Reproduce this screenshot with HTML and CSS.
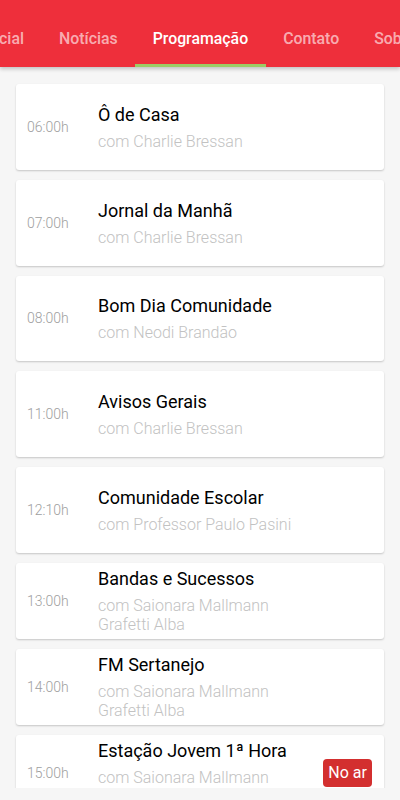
FILE: index.html
```html
<!DOCTYPE html>
<html lang="pt-BR">
<head>
<meta charset="utf-8">
<title>Programação</title>
<link rel="stylesheet" href="styles.css">
</head>
<body>
<header class="appbar">
  <nav class="tabs">
    <div class="tab">Social</div>
    <div class="tab">Notícias</div>
    <div class="tab active">Programação</div>
    <div class="tab">Contato</div>
    <div class="tab">Sobre</div>
  </nav>
</header>
<main class="list">
  <div class="card">
    <div class="time">06:00h</div>
    <div class="info"><div class="title">Ô de Casa</div><div class="host">com Charlie Bressan</div></div>
  </div>
  <div class="card">
    <div class="time">07:00h</div>
    <div class="info"><div class="title">Jornal da Manhã</div><div class="host">com Charlie Bressan</div></div>
  </div>
  <div class="card">
    <div class="time">08:00h</div>
    <div class="info"><div class="title">Bom Dia Comunidade</div><div class="host">com Neodi Brandão</div></div>
  </div>
  <div class="card">
    <div class="time">11:00h</div>
    <div class="info"><div class="title">Avisos Gerais</div><div class="host">com Charlie Bressan</div></div>
  </div>
  <div class="card">
    <div class="time">12:10h</div>
    <div class="info"><div class="title">Comunidade Escolar</div><div class="host">com Professor Paulo Pasini</div></div>
  </div>
  <div class="card multi">
    <div class="time">13:00h</div>
    <div class="info"><div class="title">Bandas e Sucessos</div><div class="host">com Saionara Mallmann<br>Grafetti Alba</div></div>
  </div>
  <div class="card multi">
    <div class="time">14:00h</div>
    <div class="info"><div class="title">FM Sertanejo</div><div class="host">com Saionara Mallmann<br>Grafetti Alba</div></div>
  </div>
  <div class="card multi">
    <div class="time">15:00h</div>
    <div class="info"><div class="title">Estação Jovem 1ª Hora</div><div class="host">com Saionara Mallmann<br>Grafetti Alba</div></div>
    <div class="badge">No ar</div>
  </div>
</main>
</body>
</html>
```
FILE: styles.css
```css
* { box-sizing: border-box; }
html, body { margin: 0; padding: 0; }
body {
  display: flex;
  flex-direction: column;
  width: 400px;
  height: 800px;
  overflow: hidden;
  background: #f6f6f6;
  font-family: Roboto, "Noto Sans", sans-serif;
}
.appbar {
  position: relative;
  z-index: 2;
  flex: none;
  height: 67px;
  background: #ee2f3b;
  box-shadow: 0 2px 4px rgba(0,0,0,0.22);
  overflow: hidden;
}
.tabs {
  display: flex;
  height: 67px;
  margin-left: -37px;
  padding-top: 9px;
}
.tab {
  flex: none;
  display: flex;
  align-items: center;
  padding: 3px 17.5px 0;
  font-size: 15.85px;
  font-weight: 500;
  color: rgba(255,255,255,0.62);
  white-space: nowrap;
  border-bottom: 3px solid transparent;
}
.tab.active {
  color: #fff;
  border-bottom-color: #9ccc65;
}
.list {
  flex: none;
  height: 721px;
  overflow: hidden;
  padding: 17px 16px 0;
}
.card {
  display: grid;
  grid-template-columns: 82px 1fr auto;
  align-items: center;
  min-height: 85.8px;
  padding: 4.5px 12px 4.5px 0;
  margin-bottom: 10px;
  background: #fff;
  border-radius: 3px;
  box-shadow: 0 1px 2px rgba(0,0,0,0.2);
}
.card.multi {
  min-height: 0;
}
.time {
  padding-left: 11px;
  font-size: 14px;
  font-weight: 300;
  color: #9e9e9e;
}
.title {
  font-size: 18px;
  line-height: 24px;
  color: #000;
  margin-bottom: 5px;
}
.host {
  font-size: 16px;
  font-weight: 300;
  line-height: 19px;
  color: #c2c2c2;
}
.badge {
  background: #d32f2f;
  color: #fff;
  font-size: 16px;
  line-height: 28px;
  padding: 0 5px;
  border-radius: 4px;
}
```
